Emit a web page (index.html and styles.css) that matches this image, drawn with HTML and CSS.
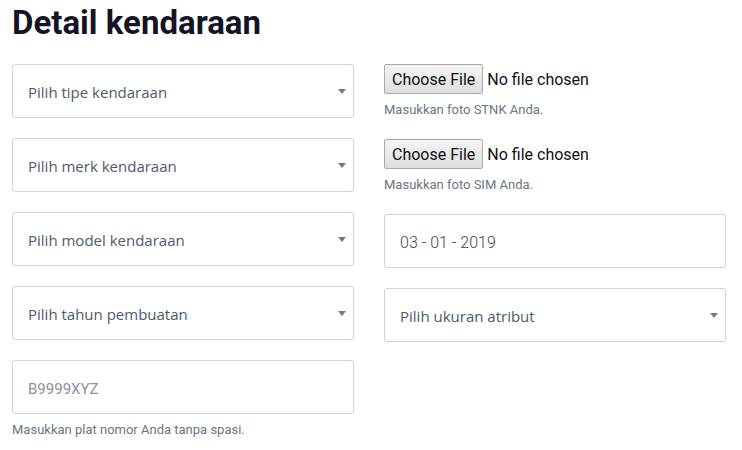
FILE: index.html
```
<!DOCTYPE html>
<html lang="id">
<head>
  <meta charset="UTF-8">
  <meta name="viewport" content="width=device-width, initial-scale=1.0">
  <title>Detail kendaraan</title>
  <link rel="stylesheet" href="styles.css">
</head>
<body>
  <div class="container">
    <h2>Detail kendaraan</h2>
    <div class="grid">
      <!-- Kolom kiri -->
      <div class="col">
        <div class="field select-wrap">
          <select id="tipe">
            <option value="">Pilih tipe kendaraan</option>
          </select>
        </div>
        <div class="field select-wrap">
          <select id="merk">
            <option value="">Pilih merk kendaraan</option>
          </select>
        </div>
        <div class="field select-wrap">
          <select id="model">
            <option value="">Pilih model kendaraan</option>
          </select>
        </div>
        <div class="field select-wrap">
          <select id="tahun">
            <option value="">Pilih tahun pembuatan</option>
          </select>
        </div>
        <div class="field">
          <input type="text" id="plat" placeholder="B9999XYZ">
          <small>Masukkan plat nomor Anda tanpa spasi.</small>
        </div>
      </div>

      <!-- Kolom kanan -->
      <div class="col">
        <div class="file-field">
          <input type="file" id="stnk">
          <small>Masukkan foto STNK Anda.</small>
        </div>
        <div class="file-field">
          <input type="file" id="sim">
          <small>Masukkan foto SIM Anda.</small>
        </div>
        <div class="field">
          <input type="text" id="tanggal" value="03 - 01 - 2019">
        </div>
        <div class="field select-wrap">
          <select id="ukuran">
            <option value="">Pilih ukuran atribut</option>
          </select>
        </div>
      </div>
    </div>
  </div>
</body>
</html>
```

FILE: styles.css
```
body {
  margin: 0;
  font-family: "Open Sans", Arial, sans-serif;
  background: white;
}
.container {
  padding: 0 12px;
}
h2 {
  font-family: Roboto, Arial, sans-serif;
  font-weight: 700;
  font-size: 33px;
  color: #141424;
  margin: 3px 0 21px;
  line-height: 40px;
}
.grid {
  display: grid;
  grid-template-columns: 342px 342px;
  column-gap: 30px;
}
.field {
  margin-bottom: 20px;
}
.select-wrap {
  position: relative;
}
.select-wrap::after {
  content: "";
  position: absolute;
  right: 8px;
  top: 25px;
  border-left: 4px solid transparent;
  border-right: 4px solid transparent;
  border-top: 5px solid #7a7a7a;
  pointer-events: none;
}
select, input[type="text"] {
  display: block;
  width: 100%;
  height: 54px;
  padding: 2px 15px 0;
  border: 1px solid #ced3db;
  border-radius: 3px;
  background: white;
  font-family: "Open Sans", Arial, sans-serif;
  font-size: 15px;
  color: #4d5a6a;
  box-sizing: border-box;
  appearance: none;
  -webkit-appearance: none;
  outline: none;
}
input[type="text"]::placeholder {
  font-family: Roboto, Arial, sans-serif;
  color: #8a929c;
}
#plat {
  margin-bottom: 8px;
}
#tanggal {
  font-family: Roboto, Arial, sans-serif;
  font-weight: 300;
  font-size: 16px;
  color: #3a4450;
}
small {
  display: block;
  font-family: Roboto, Arial, sans-serif;
  font-size: 13px;
  color: #6b7580;
}
.file-field {
  height: 75px;
}
input[type="file"] {
  display: block;
  font-family: Roboto, Arial, sans-serif;
  font-size: 16px;
  color: #111;
  margin: 0 0 8px;
}
input[type="file"]::file-selector-button {
  font-family: Roboto, Arial, sans-serif;
  font-size: 16px;
  height: 30px;
  padding: 0 7px;
  margin-right: 4px;
  border: 1px solid #a9a9a9;
  border-radius: 2px;
  background: linear-gradient(#f4f4f4, #dedede);
  color: #111;
}
```
